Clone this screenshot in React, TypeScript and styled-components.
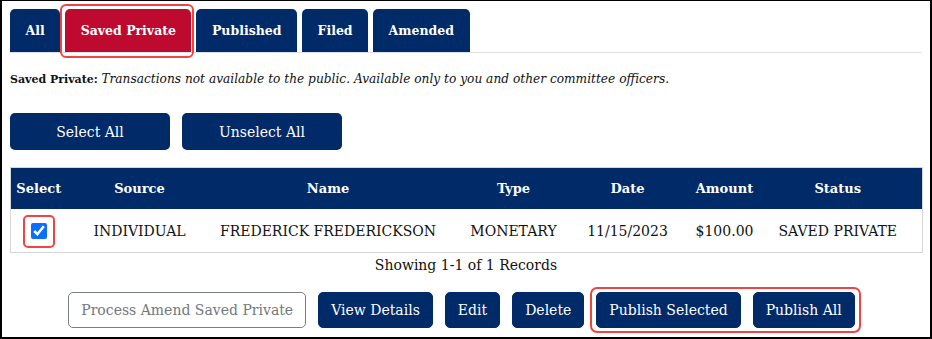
import React from 'react';
import styled, { createGlobalStyle } from 'styled-components';

const navy = '#012a68';
const red = '#bf0a30';
const marker = '#ef4444';

const GlobalStyle = createGlobalStyle`
  html, body {
    margin: 0;
    padding: 0;
    background: #ffffff;
  }
  body {
    font-family: "DejaVu Serif", "Liberation Serif", serif;
    color: #111111;
  }
`;

const Frame = styled.div`
  box-sizing: border-box;
  width: 932px;
  height: 339px;
  border: 2px solid #000;
  border-top-width: 1px;
  padding: 8px 8px 0 8px;
  background: #fff;
  overflow: hidden;
`;

const TabBar = styled.div`
  display: flex;
  gap: 5px;
  border-bottom: 1px solid #dcdfe3;
`;

const Tab = styled.div<{ $active?: boolean; $marked?: boolean }>`
  position: relative;
  height: 43px;
  display: flex;
  align-items: center;
  padding: 0 15.5px;
  background: ${(p) => (p.$active ? red : navy)};
  color: #fff;
  font-size: 12.5px;
  font-weight: 700;
  border-radius: 5px 5px 0 0;

  ${(p) =>
    p.$marked &&
    `
    &::after {
      content: '';
      position: absolute;
      top: -5px;
      left: -5px;
      right: -3px;
      bottom: -6px;
      border: 2px solid ${marker};
      border-radius: 6px;
      pointer-events: none;
    }
  `}
`;

const Description = styled.p`
  margin: 18px 0 0 0;
  font-size: 11px;
  line-height: 16px;
  height: 16px;
  color: #111;

  b {
    font-weight: 700;
  }
  i {
    font-style: italic;
    font-size: 12.2px;
    line-height: 16px;
  }
`;

const SelectBar = styled.div`
  display: flex;
  gap: 12px;
  margin-top: 26px;
`;

const WideButton = styled.button`
  width: 160px;
  height: 37px;
  border: none;
  border-radius: 5px;
  background: ${navy};
  color: #fff;
  font-family: inherit;
  font-size: 14px;
  cursor: pointer;
`;

const Table = styled.table`
  width: 912px;
  margin-top: 17px;
  border-collapse: collapse;
  table-layout: fixed;
  border: 1px solid #d3d5d9;
`;

const Col = styled.col<{ $w: number }>`
  width: ${(p) => p.$w}px;
`;

const Th = styled.th<{ $last?: boolean }>`
  height: 41px;
  padding: 0 ${(p) => (p.$last ? '24px' : '0')} 0 0;
  background: ${navy};
  color: #fff;
  font-size: 13px;
  font-weight: 700;
  text-align: center;
`;

const Td = styled.td<{ $last?: boolean }>`
  height: 43px;
  padding: 0 ${(p) => (p.$last ? '24px' : '0')} 0 0;
  font-size: 14px;
  text-align: center;
  white-space: nowrap;
`;

const CheckWrap = styled.span`
  position: relative;
  display: inline-flex;
  vertical-align: middle;

  &::after {
    content: '';
    position: absolute;
    top: -8px;
    left: -8px;
    right: -8px;
    bottom: -9px;
    border: 2px solid ${marker};
    border-radius: 5px;
    pointer-events: none;
  }
`;

const Check = styled.input`
  width: 16px;
  height: 16px;
  margin: 0;
  accent-color: #0b6efd;
`;

const Summary = styled.div`
  margin-top: 2px;
  font-size: 14px;
  line-height: 20px;
  text-align: center;
`;

const ActionBar = styled.div`
  display: flex;
  justify-content: center;
  gap: 12px;
  margin-top: 17px;
  padding-right: 9px;
`;

const ActionButton = styled.button<{ $outline?: boolean }>`
  height: 36px;
  padding: 0 12px;
  border-radius: 5px;
  border: 1px solid ${(p) => (p.$outline ? '#7a7f86' : navy)};
  background: ${(p) => (p.$outline ? '#fff' : navy)};
  color: ${(p) => (p.$outline ? '#73787e' : '#fff')};
  font-family: inherit;
  font-size: 14px;
  white-space: nowrap;
  cursor: pointer;
`;

const MarkedGroup = styled.div`
  position: relative;
  display: flex;
  gap: 12px;

  &::after {
    content: '';
    position: absolute;
    top: -5px;
    left: -6px;
    right: -6px;
    bottom: -5px;
    border: 2px solid ${marker};
    border-radius: 7px;
    pointer-events: none;
  }
`;

const tabs = ['All', 'Saved Private', 'Published', 'Filed', 'Amended'];
const columns: [string, number][] = [
  ['Select', 56],
  ['Source', 146],
  ['Name', 231],
  ['Type', 140],
  ['Date', 88],
  ['Amount', 106],
  ['Status', 145],
];

const rows = [
  {
    source: 'INDIVIDUAL',
    name: 'FREDERICK FREDERICKSON',
    type: 'MONETARY',
    date: '11/15/2023',
    amount: '$100.00',
    status: 'SAVED PRIVATE',
  },
];

export default function App() {
  return (
    <>
      <GlobalStyle />
      <Frame>
        <TabBar>
          {tabs.map((t) => (
            <Tab key={t} $active={t === 'Saved Private'} $marked={t === 'Saved Private'}>
              {t}
            </Tab>
          ))}
        </TabBar>

        <Description>
          <b>Saved Private:</b>{' '}
          <i>Transactions not available to the public. Available only to you and other committee officers.</i>
        </Description>

        <SelectBar>
          <WideButton>Select All</WideButton>
          <WideButton>Unselect All</WideButton>
        </SelectBar>

        <Table>
          <colgroup>
            {columns.map(([c, w]) => (
              <Col key={c} $w={w} />
            ))}
          </colgroup>
          <thead>
            <tr>
              {columns.map(([c], i) => (
                <Th key={c} $last={i === columns.length - 1}>
                  {c}
                </Th>
              ))}
            </tr>
          </thead>
          <tbody>
            {rows.map((r) => (
              <tr key={r.name}>
                <Td>
                  <CheckWrap>
                    <Check type="checkbox" defaultChecked />
                  </CheckWrap>
                </Td>
                <Td>{r.source}</Td>
                <Td>{r.name}</Td>
                <Td>{r.type}</Td>
                <Td>{r.date}</Td>
                <Td>{r.amount}</Td>
                <Td $last>{r.status}</Td>
              </tr>
            ))}
          </tbody>
        </Table>

        <Summary>Showing 1-1 of 1 Records</Summary>

        <ActionBar>
          <ActionButton $outline>Process Amend Saved Private</ActionButton>
          <ActionButton>View Details</ActionButton>
          <ActionButton>Edit</ActionButton>
          <ActionButton>Delete</ActionButton>
          <MarkedGroup>
            <ActionButton>Publish Selected</ActionButton>
            <ActionButton>Publish All</ActionButton>
          </MarkedGroup>
        </ActionBar>
      </Frame>
    </>
  );
}
